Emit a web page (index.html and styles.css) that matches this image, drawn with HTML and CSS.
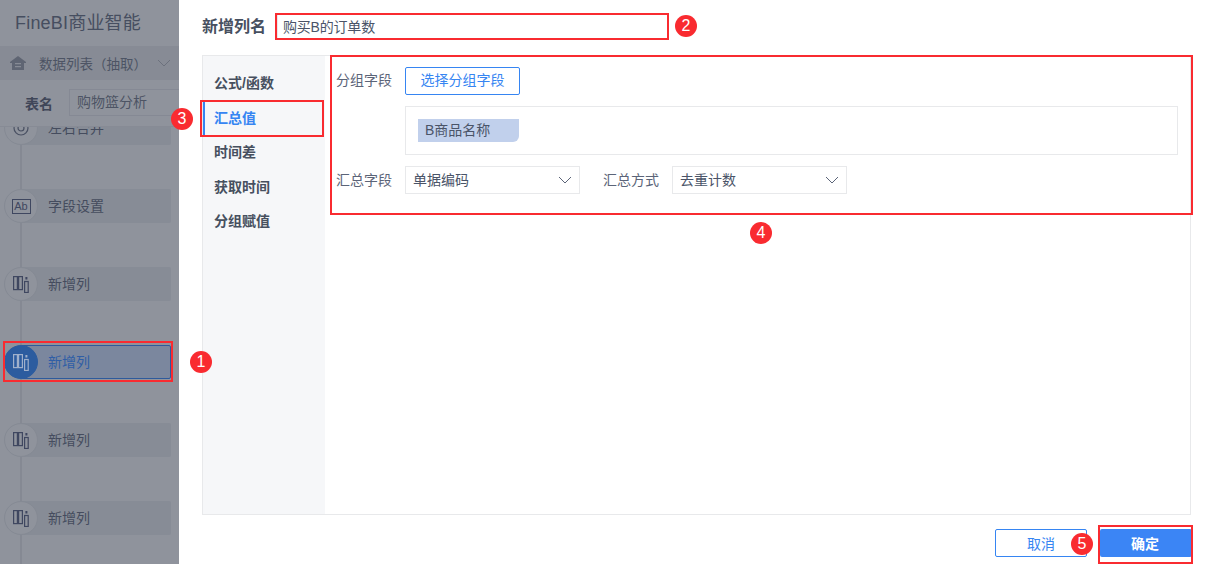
FILE: index.html
```html
<!DOCTYPE html>
<html lang="zh-CN">
<head>
    <meta charset="UTF-8">
    <title>新增列</title>
    <link rel="stylesheet" href="styles.css">
</head>
<body>
    <div class="page">
        <aside class="sidebar">
            <div class="side-head">
                <div class="brand">FineBI商业智能</div>
                <div class="source-bar">
                    <svg class="home-icon" width="16" height="16" viewBox="0 0 16 16"><path d="M8 1 L16 7 V8 H14 V15 H2 V8 H0 V7 Z M5 8 V9.2 H11 V8 Z M5 11 V12.2 H11 V11 Z" fill="#5f6573" fill-rule="evenodd"/></svg>
                    <span>数据列表（抽取）</span>
                    <svg class="source-arrow" width="14" height="8" viewBox="0 0 14 8"><path d="M1 1 L7 7 L13 1" fill="none" stroke="#6c717d" stroke-width="1"/></svg>
                </div>
                <div class="name-row">
                    <span class="name-label">表名</span>
                    <div class="name-input">购物篮分析</div>
                </div>
            </div>
            <div class="steps">
                <div class="step">
                    <div class="step-circle">
                        <svg width="20" height="20" viewBox="0 0 20 20"><circle cx="10" cy="10" r="7" fill="none" stroke="#4a5163" stroke-width="1.2"/><circle cx="10" cy="10" r="3" fill="none" stroke="#4a5163" stroke-width="1.2"/></svg>
                    </div>
                    <div class="step-body">左右合并</div>
                </div>
                <div class="step">
                    <div class="step-circle"><span class="ab-icon">Ab</span></div>
                    <div class="step-body">字段设置</div>
                </div>
                <div class="step">
                    <div class="step-circle">
                        <svg width="16" height="17" viewBox="0 0 16 17"><use href="#cols"/></svg>
                    </div>
                    <div class="step-body">新增列</div>
                </div>
                <div class="step active">
                    <div class="step-circle">
                        <svg width="16" height="17" viewBox="0 0 16 17"><use href="#cols"/></svg>
                    </div>
                    <div class="step-body">新增列</div>
                </div>
                <div class="step">
                    <div class="step-circle">
                        <svg width="16" height="17" viewBox="0 0 16 17"><use href="#cols"/></svg>
                    </div>
                    <div class="step-body">新增列</div>
                </div>
                <div class="step">
                    <div class="step-circle">
                        <svg width="16" height="17" viewBox="0 0 16 17"><use href="#cols"/></svg>
                    </div>
                    <div class="step-body">新增列</div>
                </div>
            </div>
        </aside>

        <main class="main">
            <div class="title-row">
                <span class="title-label">新增列名</span>
                <div class="title-input">购买B的订单数</div>
            </div>

            <div class="panel">
                <nav class="tabs">
                    <div class="tab">公式/函数</div>
                    <div class="tab current">汇总值</div>
                    <div class="tab">时间差</div>
                    <div class="tab">获取时间</div>
                    <div class="tab">分组赋值</div>
                </nav>
                <div class="content">
                    <div class="form-row">
                        <span class="field-label first">分组字段</span>
                        <button class="btn-outline">选择分组字段</button>
                    </div>
                    <div class="chip-box">
                        <span class="chip">B商品名称</span>
                    </div>
                    <div class="form-row">
                        <span class="field-label">汇总字段</span>
                        <div class="select">
                            <span>单据编码</span>
                            <svg width="14" height="8" viewBox="0 0 14 8"><path d="M1 1 L7 7 L13 1" fill="none" stroke="#5b6478" stroke-width="1"/></svg>
                        </div>
                        <span class="field-label second">汇总方式</span>
                        <div class="select">
                            <span>去重计数</span>
                            <svg width="14" height="8" viewBox="0 0 14 8"><path d="M1 1 L7 7 L13 1" fill="none" stroke="#5b6478" stroke-width="1"/></svg>
                        </div>
                    </div>
                </div>
            </div>

            <div class="footer">
                <button class="btn-cancel">取消</button>
                <button class="btn-ok">确定</button>
            </div>
        </main>
    </div>

    <svg class="defs" width="0" height="0">
        <symbol id="cols" viewBox="0 0 16 17">
            <g fill="none" stroke="currentColor" stroke-width="1.2">
                <rect x="0.6" y="0.6" width="3.8" height="13"/>
                <rect x="5.6" y="0.6" width="3.8" height="13"/>
                <rect x="11.6" y="5.5" width="3.6" height="11"/>
            </g>
            <rect x="12.4" y="1" width="2" height="2.5" fill="currentColor"/>
        </symbol>
    </svg>

    <!-- red marks drawn over the screenshot -->
    <div class="mark mark-1"></div>
    <div class="mark mark-2"></div>
    <div class="mark mark-3"></div>
    <div class="mark mark-4"></div>
    <div class="mark mark-5"></div>
    <div class="badge badge-1">1</div>
    <div class="badge badge-2">2</div>
    <div class="badge badge-3">3</div>
    <div class="badge badge-4">4</div>
    <div class="badge badge-5">5</div>
</body>
</html>
```

FILE: styles.css
```css
* {
    box-sizing: border-box;
}
html, body {
    margin: 0;
    height: 100%;
    overflow: hidden;
}
body {
    font-family: "Liberation Sans", "Noto Sans CJK SC", sans-serif;
    font-size: 14px;
    color: #4a5468;
    background: #fff;
}
.page {
    display: flex;
    height: 564px;
}
.defs {
    position: absolute;
}

/* sidebar, dimmed by the dialog */
.sidebar {
    width: 179px;
    flex: none;
    background: #8f939c;
    overflow: hidden;
    color: #454c5e;
}
.side-head {
    position: relative;
    z-index: 2;
    background: #8f939c;
    border-bottom: 1px solid #878b95;
    height: 127px;
}
.brand {
    height: 46px;
    padding-left: 15px;
    font-size: 18px;
    letter-spacing: 0.2px;
    line-height: 47px;
    color: #464e60;
}
.source-bar {
    display: flex;
    align-items: center;
    height: 34px;
    padding-left: 10px;
    background: #878b95;
    color: #4d5464;
}
.home-icon {
    flex: none;
    margin-right: 13px;
}
.source-bar span {
    white-space: nowrap;
    font-size: 13.5px;
}
.source-arrow {
    flex: none;
    margin-left: auto;
    margin-right: 8px;
}
.name-row {
    display: flex;
    align-items: center;
    height: 46px;
    padding-left: 25px;
    padding-bottom: 1px;
}
.name-label {
    font-weight: bold;
    width: 44px;
    flex: none;
    color: #3f4658;
}
.name-input {
    width: 130px;
    flex: none;
    height: 27px;
    line-height: 25px;
    padding-left: 7px;
    border: 1px solid #858994;
    color: #4d5464;
}
.steps {
    display: flex;
    flex-direction: column;
    gap: 44px;
    margin-top: -16px;
    padding-left: 4px;
}
.step {
    position: relative;
    display: flex;
    align-items: center;
    height: 34px;
}
.step::after {
    content: "";
    position: absolute;
    left: 16px;
    top: 34px;
    width: 2px;
    height: 44px;
    background: #858993;
}
.step-circle {
    position: relative;
    z-index: 1;
    flex: none;
    display: flex;
    align-items: center;
    justify-content: center;
    width: 34px;
    height: 34px;
    border-radius: 50%;
    border: 1px solid #858a94;
    background: #8f939c;
    color: #3f4760;
}
.step-body {
    width: 150px;
    height: 34px;
    margin-left: -17px;
    padding-left: 27px;
    line-height: 35px;
    background: #878c96;
    border-radius: 2px;
}
.ab-icon {
    width: 19px;
    height: 15px;
    border: 1px solid #3f4760;
    font-size: 11px;
    line-height: 13px;
    text-align: center;
}
.step.active .step-circle {
    background: #2c5c9f;
    border-color: #2c5c9f;
    color: #9fb0cb;
}
.step.active .step-body {
    background: #7b879e;
    border: 1px solid #2e5a9c;
    line-height: 33px;
    padding-left: 26px;
    color: #2f5ea6;
}

/* dialog */
.main {
    flex: 1;
    display: flex;
    flex-direction: column;
    padding: 0 23px;
    min-width: 0;
}
.title-row {
    display: flex;
    align-items: center;
    height: 55px;
    flex: none;
    padding-bottom: 2px;
}
.title-label {
    width: 75px;
    flex: none;
    padding-bottom: 3px;
    font-size: 16px;
    font-weight: bold;
    color: #47505f;
}
.title-input {
    width: 392px;
    height: 25px;
    line-height: 25px;
    padding-left: 5px;
    font-size: 14px;
    letter-spacing: -0.2px;
    border: 1px solid #e8e9eb;
}
.panel {
    flex: 1;
    display: flex;
    border: 1px solid #e8e9eb;
    min-height: 0;
}
.tabs {
    width: 122px;
    flex: none;
    padding-top: 10px;
    background: #f6f7f9;
}
.tab {
    height: 34.5px;
    line-height: 34.5px;
    font-weight: bold;
    color: #47505f;
    border-left: 2px solid transparent;
    padding-left: 9px;
}
.tab.current {
    color: #3685f2;
    border-left-color: #3685f2;
}
.content {
    flex: 1;
    padding: 11px 12px 0 11px;
}
.form-row {
    display: flex;
    align-items: center;
    height: 28px;
}
.field-label {
    width: 69px;
    flex: none;
    padding-bottom: 3px;
    color: #5b6478;
}
.field-label.first {
    padding-bottom: 5px;
}
.field-label.second {
    margin-left: 23px;
}
.btn-outline {
    width: 115px;
    height: 28px;
    padding: 0 0 5px;
    font: inherit;
    color: #3685f2;
    background: #fff;
    border: 1px solid #3685f2;
    border-radius: 2px;
}
.chip-box {
    margin: 11px 0 11px 69px;
    height: 49px;
    padding: 12px;
    border: 1px solid #e8e9eb;
}
.chip {
    display: block;
    width: 101px;
    height: 23px;
    line-height: 23px;
    padding-left: 7px;
    background: #c1d0ec;
    border-radius: 0 0 6px 0;
}
.select {
    display: flex;
    align-items: center;
    justify-content: space-between;
    width: 175px;
    height: 28px;
    padding: 0 7px;
    border: 1px solid #e8e9eb;
}
.select span {
    padding-bottom: 3px;
}
.footer {
    flex: none;
    height: 49px;
    display: flex;
    justify-content: flex-end;
    align-items: flex-start;
    gap: 13px;
    padding-top: 14px;
    margin-right: -1px;
}
.footer button {
    width: 92px;
    height: 28px;
    padding: 0;
    font: inherit;
    border-radius: 2px;
}
.btn-cancel {
    color: #3685f2;
    background: #fff;
    border: 1px solid #3685f2;
}
.footer .btn-ok {
    color: #fff;
    background: #3b85f5;
    border: none;
    padding-right: 2px;
    font-weight: bold;
}

/* annotations */
.mark {
    position: absolute;
    z-index: 5;
    border: 2px solid #f92b30;
}
.mark-1 { left: 3px; top: 341px; width: 170px; height: 41px; }
.mark-2 { left: 275px; top: 13px; width: 394px; height: 27px; }
.mark-3 { left: 200px; top: 100px; width: 124px; height: 37px; }
.mark-4 { left: 330px; top: 55px; width: 863px; height: 160px; }
.mark-5 { left: 1098px; top: 525px; width: 95px; height: 39px; }
.badge {
    position: absolute;
    z-index: 5;
    width: 22px;
    height: 22px;
    border-radius: 50%;
    background: #f92b30;
    color: #fff;
    font-size: 16px;
    line-height: 22px;
    text-align: center;
}
.badge-1 { left: 190px; top: 351px; }
.badge-2 { left: 675px; top: 15px; }
.badge-3 { left: 171px; top: 108px; }
.badge-4 { left: 750px; top: 222px; }
.badge-5 { left: 1071px; top: 533px; }
```
